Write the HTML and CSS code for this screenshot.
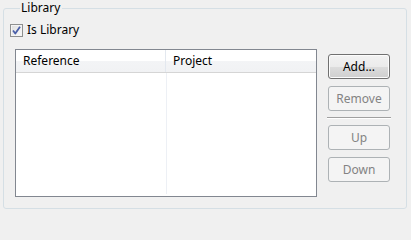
FILE: index.html
```html
<!DOCTYPE html>
<html>
<head>
<meta charset="utf-8">
<link rel="stylesheet" href="styles.css">
</head>
<body>
<fieldset class="group">
  <legend class="group-title">Library</legend>
  <label class="check-row">
    <span class="checkbox">
      <svg width="11" height="11" viewBox="0 0 11 11"><path d="M2 5.5 L4.3 8.5 L9 1.8" fill="none" stroke="#4a5fa8" stroke-width="1.8" stroke-linejoin="round"/></svg>
    </span>
    <span class="check-label">Is Library</span>
  </label>
  <div class="content">
    <div class="table">
      <div class="thead">
        <div class="th col1">Reference</div>
        <div class="th col2">Project</div>
      </div>
      <div class="tbody">
        <div class="td col1"></div>
        <div class="td col2"></div>
      </div>
    </div>
    <div class="buttons">
      <button class="btn primary">Add...</button>
      <button class="btn disabled">Remove</button>
      <div class="sep"></div>
      <button class="btn disabled">Up</button>
      <button class="btn disabled">Down</button>
    </div>
  </div>
</fieldset>
</body>
</html>
```
FILE: styles.css
```css
html, body {
  margin: 0;
  padding: 0;
  background: #f0f0f0;
  width: 411px;
  height: 209px;
  overflow: hidden;
  font-family: "Noto Sans", "Open Sans", sans-serif;
  font-size: 12px;
  color: #000;
}
.group {
  margin: 0 4px 0 3px;
  padding: 0 0 0 11px;
  border: 1px solid #d5dfe5;
  border-radius: 3px;
  height: 209px;
  box-sizing: border-box;
}
.group-title {
  margin-left: 5px;
  padding: 0 2px 0 1px;
  line-height: 16px;
  color: #000;
}
.check-row {
  display: flex;
  align-items: center;
  margin-top: 7px;
  margin-left: -5px;
  height: 14px;
}
.checkbox {
  width: 11px;
  height: 11px;
  border: 1px solid #8e8f8f;
  background: linear-gradient(135deg, #dcdcdc, #fbfbfb);
  display: flex;
  align-items: center;
  justify-content: center;
  box-shadow: inset 0 0 0 1px #f4f4f4;
}
.check-label {
  margin-left: 4px;
  line-height: 14px;
}
.content {
  display: flex;
  margin-top: 12px;
}
.table {
  width: 302px;
  height: 148px;
  box-sizing: border-box;
  border: 1px solid #828790;
  background: #fff;
  display: flex;
  flex-direction: column;
}
.thead {
  display: flex;
  height: 23px;
  box-sizing: border-box;
  border-bottom: 1px solid #d5d5d5;
  background: linear-gradient(#ffffff, #ffffff 50%, #f3f4f6 50%, #f1f2f4);
}
.th {
  line-height: 21px;
  padding-left: 7px;
  box-sizing: border-box;
}
.col1 {
  width: 150px;
  border-right: 1px solid #e3e8ef;
}
.col2 {
  flex: 1;
}
.tbody {
  flex: 1;
  display: flex;
  padding-bottom: 2px;
}
.td.col1 {
  border-right: 1px solid #edf0f5;
}
.buttons {
  display: flex;
  flex-direction: column;
  margin-left: 11px;
  margin-top: 5px;
  width: 62px;
}
.btn {
  height: 25px;
  width: 62px;
  box-sizing: border-box;
  border-radius: 3px;
  font-family: inherit;
  font-size: 12px;
  padding: 0;
  margin: 0 0 7px 0;
}
.primary {
  border: 1px solid #707070;
  background: linear-gradient(#f2f2f2, #ebebeb 50%, #dddddd 50%, #cfcfcf);
  box-shadow: inset 0 0 0 1px #fcfcfc;
  color: #000;
}
.disabled {
  border: 1px solid #adb2b5;
  background: #f4f4f4;
  color: #838383;
}
.sep {
  height: 1px;
  background: #a0a0a0;
  border-bottom: 1px solid #fff;
  margin: -1px -1px 6px -1px;
}
```
